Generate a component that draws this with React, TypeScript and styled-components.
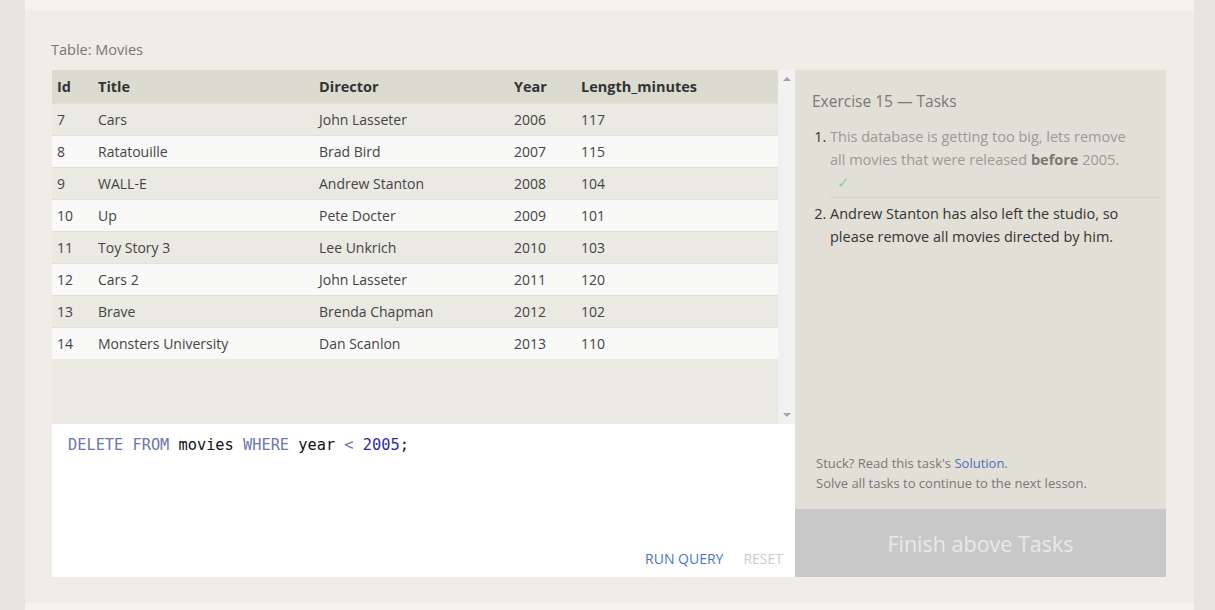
import React from "react";
import styled, { createGlobalStyle } from "styled-components";

const Global = createGlobalStyle`
  html, body { margin: 0; padding: 0; }
  body {
    background: #e8e5e1;
    font-family: "Open Sans", "Noto Sans", sans-serif;
    -webkit-font-smoothing: antialiased;
  }
`;

const Column = styled.div`
  width: 1169px;
  margin-left: 25px;
  display: flex;
  flex-direction: column;
  min-height: 610px;
  background: #f5f3ef;
`;

const TopStrip = styled.div`
  height: 10px;
  background: #f5f3ef;
`;

const Card = styled.div`
  background: #f0ede6;
  padding: 30px 28px 26px 27px;
`;

const Caption = styled.div`
  font-size: 14.5px;
  line-height: 20px;
  color: #777;
  margin: 0 0 10px -1px;
`;

const Layout = styled.div`
  display: grid;
  grid-template-columns: 743px 371px;
`;

const Left = styled.div`
  display: flex;
  flex-direction: column;
`;

const TableArea = styled.div`
  height: 354px;
  display: flex;
  background: #eae9e2;
`;

const TableBox = styled.div`
  flex: 1;
`;

const Table = styled.table`
  width: 100%;
  table-layout: fixed;
  border-collapse: collapse;
  font-size: 14px;
  color: #444;
`;

const Th = styled.th<{ $w?: number }>`
  text-align: left;
  font-weight: 700;
  font-size: 14.5px;
  color: #333;
  background: #dcdbd0;
  height: 33px;
  padding: 0 0 0 5px;
  ${(p) => (p.$w ? `width: ${p.$w}px;` : "")}
`;

const Tr = styled.tr<{ $alt: boolean }>`
  background: ${(p) => (p.$alt ? "#f9f9f8" : "#eae9e2")};
  border-top: 1px solid #e0dfd8;
`;

const Td = styled.td`
  height: 31px;
  padding: 0 0 0 5px;
  white-space: nowrap;
`;

const Scrollbar = styled.div`
  width: 17px;
  background: #f1f1f1;
  display: flex;
  flex-direction: column;
  justify-content: space-between;
  align-items: center;
  padding: 7px 0;
  box-sizing: border-box;
`;

const Arrow = styled.div<{ $down?: boolean }>`
  width: 0;
  height: 0;
  border-left: 4px solid transparent;
  border-right: 4px solid transparent;
  ${(p) =>
    p.$down
      ? "border-top: 4px solid #a3a3a3;"
      : "border-bottom: 4px solid #a3a3a3;"}
`;

const Editor = styled.div`
  height: 153px;
  background: #fff;
  display: flex;
  flex-direction: column;
  justify-content: space-between;
  box-sizing: border-box;
  padding: 10px 12px 8px 16px;
`;

const Code = styled.div`
  font-family: "DejaVu Sans Mono", "Liberation Mono", monospace;
  font-size: 15.3px;
  line-height: 22px;
  color: #111;
  white-space: pre;
`;

const Tok = styled.span<{ $c: string }>`
  color: ${(p) => p.$c};
`;

const Actions = styled.div`
  display: flex;
  justify-content: flex-end;
  gap: 20px;
`;

const ActionBtn = styled.span<{ $dim?: boolean }>`
  font-size: 14px;
  line-height: 20px;
  color: ${(p) => (p.$dim ? "#cccccc" : "#4a75c4")};
`;

const Right = styled.div`
  display: flex;
  flex-direction: column;
`;

const Panel = styled.div`
  height: 439px;
  background: #e2e0d6;
  box-sizing: border-box;
  padding: 20px 6px 16px 17px;
  display: flex;
  flex-direction: column;
`;

const PanelTitle = styled.div`
  font-size: 15.5px;
  line-height: 22px;
  color: #777;
  margin-bottom: 13px;
`;

const TaskList = styled.ol`
  margin: 0;
  padding: 0 0 0 18px;
  font-size: 14.5px;
  line-height: 23px;
`;

const Task = styled.li<{ $done?: boolean }>`
  color: ${(p) => (p.$done ? "#999" : "#333")};
  padding-right: 18px;
  &::marker {
    color: #333;
  }
  & + & {
    border-top: 1px solid #d4d2c8;
    padding-top: 4px;
    margin-top: 3px;
  }
  b {
    color: #777;
  }
`;

const Check = styled.div`
  color: #8fcf8f;
  font-size: 15px;
  line-height: 23px;
  padding-left: 7px;
`;

const Spacer = styled.div`
  flex: 1;
`;

const Help = styled.div`
  font-size: 13px;
  line-height: 20px;
  color: #777;
  padding-left: 4px;
  a {
    color: #4a6fc4;
    text-decoration: none;
  }
`;

const FinishButton = styled.div`
  height: 68px;
  background: #c8c8c8;
  color: #e9e9e9;
  font-size: 21.5px;
  display: flex;
  align-items: center;
  justify-content: center;
`;

const Bottom = styled.div`
  flex: 1;
  background: #f5f3ef;
`;

const rows: [number, string, string, number, number][] = [
  [7, "Cars", "John Lasseter", 2006, 117],
  [8, "Ratatouille", "Brad Bird", 2007, 115],
  [9, "WALL-E", "Andrew Stanton", 2008, 104],
  [10, "Up", "Pete Docter", 2009, 101],
  [11, "Toy Story 3", "Lee Unkrich", 2010, 103],
  [12, "Cars 2", "John Lasseter", 2011, 120],
  [13, "Brave", "Brenda Chapman", 2012, 102],
  [14, "Monsters University", "Dan Scanlon", 2013, 110],
];

export default function App() {
  return (
    <>
      <Global />
      <Column>
        <TopStrip />
        <Card>
          <Caption>Table: Movies</Caption>
          <Layout>
            <Left>
              <TableArea>
                <TableBox>
                  <Table>
                    <thead>
                      <tr>
                        <Th $w={36}>Id</Th>
                        <Th $w={216}>Title</Th>
                        <Th $w={190}>Director</Th>
                        <Th $w={62}>Year</Th>
                        <Th>Length_minutes</Th>
                      </tr>
                    </thead>
                    <tbody>
                      {rows.map((r, i) => (
                        <Tr key={r[0]} $alt={i % 2 === 1}>
                          {r.map((c, j) => (
                            <Td key={j}>{c}</Td>
                          ))}
                        </Tr>
                      ))}
                    </tbody>
                  </Table>
                </TableBox>
                <Scrollbar>
                  <Arrow />
                  <Arrow $down />
                </Scrollbar>
              </TableArea>
              <Editor>
                <Code>
                  <Tok $c="#6b77ad">DELETE FROM</Tok> movies{" "}
                  <Tok $c="#6b77ad">WHERE</Tok> year{" "}
                  <Tok $c="#6b77ad">&lt;</Tok> <Tok $c="#2a2aa8">2005</Tok>;
                </Code>
                <Actions>
                  <ActionBtn>RUN QUERY</ActionBtn>
                  <ActionBtn $dim>RESET</ActionBtn>
                </Actions>
              </Editor>
            </Left>
            <Right>
              <Panel>
                <PanelTitle>Exercise 15 — Tasks</PanelTitle>
                <TaskList>
                  <Task $done>
                    This database is getting too big, lets remove all movies
                    that were released <b>before</b> 2005.
                    <Check>✓</Check>
                  </Task>
                  <Task>
                    Andrew Stanton has also left the studio, so please remove
                    all movies directed by him.
                  </Task>
                </TaskList>
                <Spacer />
                <Help>
                  Stuck? Read this task's <a href="#">Solution</a>.
                  <br />
                  Solve all tasks to continue to the next lesson.
                </Help>
              </Panel>
              <FinishButton>Finish above Tasks</FinishButton>
            </Right>
          </Layout>
        </Card>
        <Bottom />
      </Column>
    </>
  );
}
